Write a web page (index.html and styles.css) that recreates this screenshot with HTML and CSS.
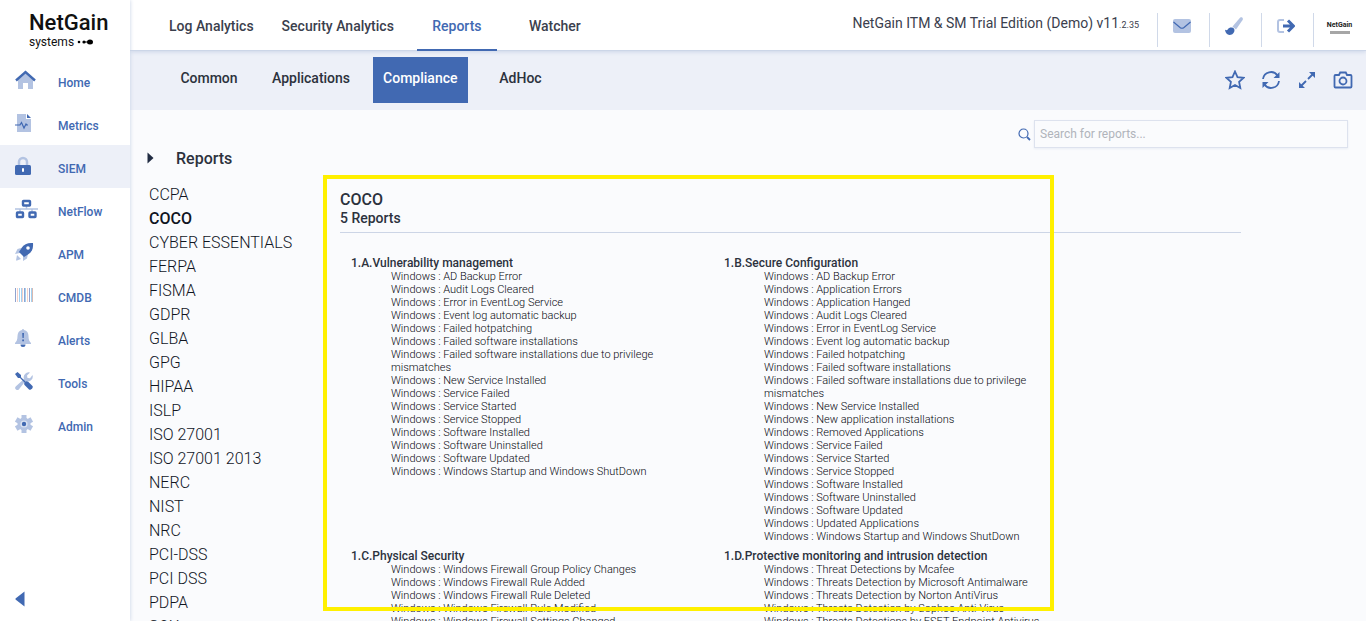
FILE: index.html
```html
<!DOCTYPE html>
<html lang="en">
<head>
  <meta charset="UTF-8" />
  <meta name="viewport" content="width=device-width, initial-scale=1.0" />
  <title>NetGain Systems - Reports</title>
  <link rel="stylesheet" href="styles.css">
</head>
<body>
  <aside class="sidebar">
    <a href="#" class="logo">
      <span class="logo-name">NetGain</span>
      <span class="logo-sub">systems
        <svg width="16" height="6" viewBox="0 0 16 6"><circle cx="2" cy="3" r="1.3"/><circle cx="7" cy="3" r="1.6"/><path d="M7 2.5h4v1H7z"/><ellipse cx="13" cy="3" rx="3" ry="2.5"/></svg>
      </span>
    </a>
    <nav class="side-nav">
      <a href="#">
        <svg width="22" height="20" viewBox="0 0 22 20"><path class="soft" d="M3 10l7.500-6.500L18 10v9h-5v-6H8v6H3z"/><path class="line thick" d="M1 10.500L10.500 2l9.500 8.500"/></svg>
        Home
      </a>
      <a href="#">
        <svg width="22" height="20" viewBox="0 0 22 20"><path class="soft" d="M2 1h9v5h5v13H2z"/><path class="solid" d="M12 1l4 4h-4z"/><path class="line thin" d="M0 12h5l1.500-2.500L9 15l2-4 1 1h1"/></svg>
        Metrics
      </a>
      <a href="#" class="active">
        <svg width="22" height="20" viewBox="0 0 22 20"><path d="M4 9V6a4 4 0 0 1 8 0v3" fill="none" stroke="#b3c3e2" stroke-width="2.500"/><rect class="solid" y="9" width="16" height="10" rx="1.500"/><rect x="7" y="12" width="2" height="4" rx="1" fill="#fff"/></svg>
        SIEM
      </a>
      <a href="#">
        <svg width="23" height="20" viewBox="0 0 23 20"><path d="M0 10h23M5 10v3M17 10v3M11.500 7v3" fill="none" stroke="#b3c3e2" stroke-width="1.500"/><g fill="#fff" stroke="#4169b2" stroke-width="2.400"><rect x="8" y="2" width="7" height="4.500" rx=".5"/><rect x="2" y="13.500" width="6" height="4.500" rx=".5"/><rect x="14.500" y="13.500" width="6" height="4.500" rx=".5"/></g></svg>
        NetFlow
      </a>
      <a href="#">
        <svg width="22" height="20" viewBox="0 0 22 20"><path class="soft" d="M6 6L2.500 7 0 12l5-1zM13 12l-1 4.500L8 19l0-5zM2 13l4 4-4 1.500H1z"/><path class="solid" d="M18 1c.500 5.500-1 9-5 11.500L9 15l-5-5 2.500-4C9 2 13 .500 18 1z"/><circle cx="13" cy="6" r="1.800" fill="#fff"/></svg>
        APM
      </a>
      <a href="#">
        <svg width="22" height="20" viewBox="0 0 22 20"><path d="M.500 3v14M9.500 3v14M14.500 3v14" stroke="#8fa3d0"/><path d="M2.500 3v14M7.500 3v14M12.500 3v14" stroke="#f3cfc8"/><path d="M4.500 3v14M6.500 3v14M10.500 3v14M16.500 3v14" stroke="#a3d2f2"/><path d="M17.500 3v14" stroke="#d9b9b0"/></svg>
        CMDB
      </a>
      <a href="#">
        <svg width="22" height="20" viewBox="0 0 22 20"><path class="soft" d="M7 2a1 1 0 0 1 2 0c3 .600 4.500 3 4.500 6 0 4 1 5.500 2.500 7v1H0v-1c1.500-1.500 2.500-3 2.500-7 0-3 1.500-5.400 4.500-6z"/><path class="solid" d="M7.200 5h1.800l-.300 5H7.500zM7.200 11.500H9v1.700H7.200zM5.500 16.500h5a2.500 2.500 0 0 1-5 0z"/></svg>
        Alerts
      </a>
      <a href="#">
        <svg width="22" height="20" viewBox="0 0 22 20"><path class="soft" d="M17.500 4a5 5 0 0 1-7 6L4 18.200a2 2 0 0 1-3.300-2.700L9 8a5 5 0 0 1 6-6.500l-3 3 .500 2.500 2.500.300z"/><path class="solid" d="M0 3l2.500-2L6 4v2.200l4.500 4.300c1-.500 2-.300 2.700.300l4.300 4.200c1.200 1.800-1.700 4.600-3.500 3.500l-4.200-4.200c-.700-.800-.800-1.800-.300-2.800L5 7H3z"/></svg>
        Tools
      </a>
      <a href="#">
        <svg width="22" height="20" viewBox="0 0 22 20"><circle cx="9" cy="10" r="6.500" class="soft"/><path d="M9 1v18M1.200 5.500l15.600 9M1.200 14.500l15.600-9" stroke="#b3c3e2" stroke-width="5"/><circle cx="9" cy="10" r="3.600" fill="#dbe3f2"/><circle cx="9" cy="10" r="2.200" class="solid"/></svg>
        Admin
      </a>
    </nav>
    <button class="collapse" aria-label="Collapse menu">
      <svg width="10" height="16" viewBox="0 0 10 16"><path class="solid" d="M9.500.5v15L.5 8.500v-1z"/></svg>
    </button>
  </aside>

  <div class="main">
    <header class="topbar">
      <ul class="tabs">
        <li><a href="#">Log Analytics</a></li>
        <li><a href="#">Security Analytics</a></li>
        <li><a href="#" class="active">Reports</a></li>
        <li><a href="#">Watcher</a></li>
      </ul>
      <div class="edition">NetGain ITM &amp; SM Trial Edition (Demo) v11<small>.2.35</small></div>
      <div class="top-actions">
        <button aria-label="Messages">
          <svg width="18" height="14" viewBox="0 0 18 14"><rect class="soft" width="18" height="14" rx="2"/><path class="line thin" d="M.500 3L7 8.500q2 1.500 4 0L17.500 3"/></svg>
        </button>
        <button aria-label="Theme">
          <svg width="18" height="18" viewBox="0 0 18 18"><path class="soft" d="M15 .800c1.800-1.300 3.600.400 2.600 2.200L11 12.500 7.500 9.500z"/><path class="solid" d="M6.500 10.500c2.500 0 3.500 2 2.800 4C8.500 17 6.500 18 4.500 18 2 18 .500 16 0 12.800c1.500.700 2 .700 2.700-.300.900-1.400 2-2 3.800-2z"/></svg>
        </button>
        <button aria-label="Log out">
          <svg width="18" height="14" viewBox="0 0 18 14"><path d="M7 1H3a2 2 0 0 0-2 2v8a2 2 0 0 0 2 2h4" fill="none" stroke="#b3c3e2" stroke-width="2"/><path class="line bold" d="M6 7h10M11 1.500L16.500 7 11 12.500"/></svg>
        </button>
        <button class="brand" aria-label="Account">
          <b>NetGain</b>
          <i></i>
        </button>
      </div>
    </header>

    <div class="subbar">
      <ul class="subtabs">
        <li><a href="#">Common</a></li>
        <li><a href="#">Applications</a></li>
        <li><a href="#" class="active">Compliance</a></li>
        <li><a href="#">AdHoc</a></li>
      </ul>
      <div class="tools">
        <button aria-label="Favourite">
          <svg width="20" height="20" viewBox="0 0 20 20"><path class="line" d="M10 1.500l2.500 5.600 6 .700-4.400 4.100 1.200 6.100-5.300-3-5.300 3 1.200-6.100L1.500 7.800l6-.700z"/></svg>
        </button>
        <button aria-label="Refresh">
          <svg width="20" height="20" viewBox="0 0 20 20"><path class="line" d="M2 9a8 8 0 0 1 14.500-3.500M18 11a8 8 0 0 1-14.500 3.500"/><path class="solid" d="M18.500 2v6h-6zM1.500 18v-6h6z"/></svg>
        </button>
        <button aria-label="Full screen">
          <svg width="20" height="20" viewBox="0 0 20 20"><path class="line" d="M4 16l5-5M11 9l5-5"/><path class="solid" d="M18 2v6l-6-6zM2 18v-6l6 6z"/></svg>
        </button>
        <button aria-label="Screenshot">
          <svg width="20" height="20" viewBox="0 0 20 20"><path class="line" d="M2.500 5H6l1.200-2.500h5.600L14 5h3.500q1 0 1 1v10.500q0 1-1 1h-15q-1 0-1-1V6q0-1 1-1z"/><circle class="line" cx="10" cy="11" r="3.500"/></svg>
        </button>
      </div>
    </div>

    <div class="search">
      <label for="search" aria-label="Search for reports">
        <svg width="13" height="13" viewBox="0 0 13 13"><circle class="line thin" cx="5.500" cy="5.500" r="4.500"/><path class="line" d="M9 9l3 3"/></svg>
      </label>
      <input type="text" id="search" placeholder="Search for reports...">
    </div>

    <div class="content">
      <section class="report-list">
        <h2>
          <svg width="7" height="12" viewBox="0 0 7 12"><path d="M.500 .5L6.500 6l-6 5.500z" fill="#212c42"/></svg>
          Reports
        </h2>
        <ul>
          <li><a href="#">CCPA</a></li>
          <li><a href="#" class="active">COCO</a></li>
          <li><a href="#">CYBER ESSENTIALS</a></li>
          <li><a href="#">FERPA</a></li>
          <li><a href="#">FISMA</a></li>
          <li><a href="#">GDPR</a></li>
          <li><a href="#">GLBA</a></li>
          <li><a href="#">GPG</a></li>
          <li><a href="#">HIPAA</a></li>
          <li><a href="#">ISLP</a></li>
          <li><a href="#">ISO 27001</a></li>
          <li><a href="#">ISO 27001 2013</a></li>
          <li><a href="#">NERC</a></li>
          <li><a href="#">NIST</a></li>
          <li><a href="#">NRC</a></li>
          <li><a href="#">PCI-DSS</a></li>
          <li><a href="#">PCI DSS</a></li>
          <li><a href="#">PDPA</a></li>
          <li><a href="#">SOX</a></li>
        </ul>
      </section>

      <section class="report-view">
        <div class="highlight"></div>
        <div class="report-head">
          <h1>COCO</h1>
          <p>5 Reports</p>
        </div>
        <div class="groups">
          <div class="group">
            <h3>1.A.Vulnerability management</h3>
            <ul>
              <li><a href="#">Windows : AD Backup Error</a></li>
              <li><a href="#">Windows : Audit Logs Cleared</a></li>
              <li><a href="#">Windows : Error in EventLog Service</a></li>
              <li><a href="#">Windows : Event log automatic backup</a></li>
              <li><a href="#">Windows : Failed hotpatching</a></li>
              <li><a href="#">Windows : Failed software installations</a></li>
              <li><a href="#">Windows : Failed software installations due to privilege mismatches</a></li>
              <li><a href="#">Windows : New Service Installed</a></li>
              <li><a href="#">Windows : Service Failed</a></li>
              <li><a href="#">Windows : Service Started</a></li>
              <li><a href="#">Windows : Service Stopped</a></li>
              <li><a href="#">Windows : Software Installed</a></li>
              <li><a href="#">Windows : Software Uninstalled</a></li>
              <li><a href="#">Windows : Software Updated</a></li>
              <li><a href="#">Windows : Windows Startup and Windows ShutDown</a></li>
            </ul>
          </div>
          <div class="group">
            <h3>1.B.Secure Configuration</h3>
            <ul>
              <li><a href="#">Windows : AD Backup Error</a></li>
              <li><a href="#">Windows : Application Errors</a></li>
              <li><a href="#">Windows : Application Hanged</a></li>
              <li><a href="#">Windows : Audit Logs Cleared</a></li>
              <li><a href="#">Windows : Error in EventLog Service</a></li>
              <li><a href="#">Windows : Event log automatic backup</a></li>
              <li><a href="#">Windows : Failed hotpatching</a></li>
              <li><a href="#">Windows : Failed software installations</a></li>
              <li><a href="#">Windows : Failed software installations due to privilege mismatches</a></li>
              <li><a href="#">Windows : New Service Installed</a></li>
              <li><a href="#">Windows : New application installations</a></li>
              <li><a href="#">Windows : Removed Applications</a></li>
              <li><a href="#">Windows : Service Failed</a></li>
              <li><a href="#">Windows : Service Started</a></li>
              <li><a href="#">Windows : Service Stopped</a></li>
              <li><a href="#">Windows : Software Installed</a></li>
              <li><a href="#">Windows : Software Uninstalled</a></li>
              <li><a href="#">Windows : Software Updated</a></li>
              <li><a href="#">Windows : Updated Applications</a></li>
              <li><a href="#">Windows : Windows Startup and Windows ShutDown</a></li>
            </ul>
          </div>
          <div class="group">
            <h3>1.C.Physical Security</h3>
            <ul>
              <li><a href="#">Windows : Windows Firewall Group Policy Changes</a></li>
              <li><a href="#">Windows : Windows Firewall Rule Added</a></li>
              <li><a href="#">Windows : Windows Firewall Rule Deleted</a></li>
              <li><a href="#">Windows : Windows Firewall Rule Modified</a></li>
              <li><a href="#">Windows : Windows Firewall Settings Changed</a></li>
            </ul>
          </div>
          <div class="group">
            <h3>1.D.Protective monitoring and intrusion detection</h3>
            <ul>
              <li><a href="#">Windows : Threat Detections by Mcafee</a></li>
              <li><a href="#">Windows : Threats Detection by Microsoft Antimalware</a></li>
              <li><a href="#">Windows : Threats Detection by Norton AntiVirus</a></li>
              <li><a href="#">Windows : Threats Detection by Sophos Anti-Virus</a></li>
              <li><a href="#">Windows : Threats Detections by ESET Endpoint Antivirus</a></li>
            </ul>
          </div>
        </div>
      </section>
    </div>
  </div>
</body>
</html>
```
FILE: styles.css
```css
* {
  box-sizing: border-box;
}

body {
  margin: 0;
  height: 100vh;
  overflow: hidden;
  display: flex;
  font-family: Roboto, "Liberation Sans", sans-serif;
  font-size: 14px;
  color: #2c323d;
  background: #fafbfd;
}

ul {
  list-style: none;
  margin: 0;
  padding: 0;
}

h1, h2, h3, p {
  margin: 0;
  font-weight: 500;
}

a {
  color: inherit;
  text-decoration: none;
}

button {
  border: none;
  background: none;
  padding: 0;
  font-family: inherit;
  cursor: pointer;
}

svg {
  display: block;
  flex-shrink: 0;
}

.soft {
  fill: #b3c3e2;
}

.solid {
  fill: #4169b2;
}

.line {
  fill: none;
  stroke: #4169b2;
  stroke-width: 1.8;
}

.line.thin {
  stroke-width: 1.2;
}

.line.thick {
  stroke-width: 2.4;
}

.line.bold {
  stroke-width: 3;
}

/* sidebar */
.sidebar {
  width: 130px;
  flex-shrink: 0;
  display: flex;
  flex-direction: column;
  background: #fff;
  box-shadow: 0 0 4px #c5d0e4;
  z-index: 2;
}

.logo {
  height: 59px;
  padding: 10px 0 0 29px;
  color: #111;
}

.logo-name {
  display: block;
  font-size: 22px;
  font-weight: 500;
  line-height: 25px;
}

.logo-sub {
  display: flex;
  align-items: center;
  gap: 3px;
  font-size: 12px;
  line-height: 14px;
}

.side-nav a {
  display: grid;
  grid-template-columns: 43px 1fr;
  align-items: center;
  height: 43px;
  padding: 4px 0 0 15px;
  font-size: 12px;
  font-weight: 500;
  color: #4169b2;
}

.side-nav svg {
  margin-bottom: 5px;
}

.side-nav a.active {
  background: #edf0f8;
}

.collapse {
  margin: auto 0 14px 15px;
  align-self: flex-start;
}

/* top bar */
.main {
  flex: 1;
  min-width: 0;
  display: flex;
  flex-direction: column;
}

.topbar {
  display: flex;
  flex-shrink: 0;
  height: 51px;
  padding: 0 1px 0 25px;
  background: #fff;
  border-bottom: 1px solid #ccd6e8;
  box-shadow: 0 1px 4px #ccd6e8;
  z-index: 1;
}

.tabs {
  display: flex;
  flex: 1;
}

.tabs li {
  display: flex;
  padding: 0 9px;
}

.tabs a {
  min-width: 80px;
  height: 51px;
  padding: 0 5px;
  text-align: center;
  font-weight: 500;
  line-height: 52px;
  color: #3b404d;
}

.tabs a.active {
  color: #4169b2;
  border-bottom: 2px solid #4169b2;
}

.edition {
  margin-right: 18px;
  line-height: 46px;
  color: #3b404d;
}

.edition small {
  font-size: 9px;
}

.top-actions {
  display: flex;
  align-items: center;
}

.top-actions button {
  display: flex;
  flex-direction: column;
  align-items: center;
  justify-content: center;
  width: 52px;
  height: 34px;
  margin-top: 10px;
  padding: 0 4px 8px 0;
  border-left: 1px solid #d0d9e9;
}

.top-actions .brand {
  padding-right: 0;
}

.brand b {
  font-size: 7px;
  line-height: 12px;
  color: #222;
}

.brand i {
  width: 20px;
  height: 3px;
  background: #a6a6a6;
}

/* second bar */
.subbar {
  display: flex;
  flex-shrink: 0;
  justify-content: space-between;
  height: 59px;
  padding: 6px 13px 7px 39px;
  background: #edf0f8;
}

.subtabs {
  display: flex;
  gap: 13px;
}

.subtabs a {
  display: block;
  min-width: 80px;
  height: 46px;
  padding: 0 10px;
  text-align: center;
  font-weight: 500;
  line-height: 42px;
}

.subtabs a.active {
  color: #fff;
  background: #4169b2;
}

.tools {
  display: flex;
  align-items: center;
  gap: 16px;
}

.search {
  display: flex;
  flex-shrink: 0;
  align-items: center;
  justify-content: flex-end;
  gap: 3px;
  padding: 10px 18px 0 0;
}

.search input {
  width: 314px;
  height: 28px;
  padding: 0 5px;
  border: 1px solid #dde2ee;
  background: #fafbfd;
  font-family: inherit;
  font-size: 12px;
  box-shadow: 0 1px 2px #e9edf5;
}

.search input::placeholder {
  color: #b0b4bb;
}

/* reports */
.content {
  display: flex;
  flex: 1;
  min-height: 0;
}

.report-list {
  width: 193px;
  flex-shrink: 0;
  padding-left: 17px;
}

.report-list h2 {
  display: flex;
  align-items: center;
  gap: 22px;
  height: 20px;
  margin-bottom: 15px;
  font-size: 16px;
}

.report-list ul {
  padding-left: 2px;
  font-size: 16px;
  line-height: 24px;
  font-weight: 300;
  color: #10151f;
}

.report-list a.active {
  font-weight: 500;
}

.report-view {
  position: relative;
  flex: 1;
  padding: 42px 125px 0 17px;
}

.highlight {
  position: absolute;
  top: 27px;
  left: 0;
  width: 731px;
  height: 436px;
  border: 4px solid #fff000;
  pointer-events: none;
}

.report-head {
  padding-bottom: 5px;
  border-bottom: 1px solid #ccd5e6;
}

.report-head h1 {
  font-size: 16px;
  line-height: 19px;
}

.report-head p {
  font-size: 14px;
  line-height: 18px;
}

.groups {
  display: grid;
  grid-template-columns: repeat(2, minmax(0, 373px));
  row-gap: 6px;
  padding: 23px 0 0 11px;
}

.group h3 {
  font-size: 12px;
  line-height: 14px;
}

.group ul {
  padding: 0 40px;
  font-size: 11px;
  line-height: 13px;
  font-weight: 300;
  color: #05080f;
}
```
